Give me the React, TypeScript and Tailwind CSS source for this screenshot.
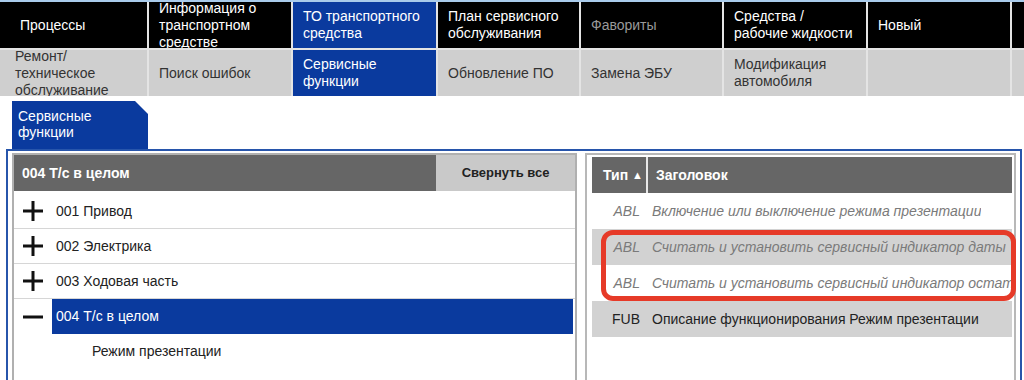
import React from "react";

const topRow = [
  { label: "Процессы", cls: "bg-black text-white pl-[20px]" },
  { label: "Информация о транспортном средстве", cls: "bg-black text-white" },
  { label: "ТО транспортного средства", cls: "bg-[#0a3a9e] text-white" },
  { label: "План сервисного обслуживания", cls: "bg-black text-white" },
  { label: "Фавориты", cls: "bg-black text-[#9a9a9a]" },
  { label: "Средства / рабочие жидкости", cls: "bg-black text-white" },
  { label: "Новый", cls: "bg-black text-white" },
  { label: "", cls: "bg-black" },
];

const subRow = [
  { label: "Ремонт/ техническое обслуживание", cls: "bg-[#cfcfcf] text-[#333] pl-[15px]" },
  { label: "Поиск ошибок", cls: "bg-[#cfcfcf] text-[#333]" },
  { label: "Сервисные функции", cls: "bg-[#0a3a9e] text-white" },
  { label: "Обновление ПО", cls: "bg-[#cfcfcf] text-[#333]" },
  { label: "Замена ЭБУ", cls: "bg-[#cfcfcf] text-[#333]" },
  { label: "Модификация автомобиля", cls: "bg-[#cfcfcf] text-[#333]" },
  { label: "", cls: "bg-[#cfcfcf]" },
  { label: "", cls: "bg-[#cfcfcf]" },
];

const groups = [
  { label: "001 Привод", open: false },
  { label: "002 Электрика", open: false },
  { label: "003 Ходовая часть", open: false },
  { label: "004 Т/с в целом", open: true },
];

const docs = [
  { type: "ABL", title: "Включение или выключение режима презентации", italic: true, shade: false },
  { type: "ABL", title: "Считать и установить сервисный индикатор даты", italic: true, shade: true },
  { type: "ABL", title: "Считать и установить сервисный индикатор остатка пробега", italic: true, shade: false },
  { type: "FUB", title: "Описание функционирования Режим презентации", italic: false, shade: true },
];

// plus / minus glyph for tree rows
const Toggle = ({ open }: { open: boolean }) => (
  <svg width="20" height="20" viewBox="0 0 20 20" className="shrink-0">
    <rect x="0" y="8.5" width="20" height="3" fill="#111" />
    {!open && <rect x="8.5" y="0" width="3" height="20" fill="#111" />}
  </svg>
);

export default function App() {
  return (
    <div className="w-[1024px] h-[380px] overflow-hidden bg-white font-['Liberation_Sans',Arial,sans-serif]">
      <div className="h-[2px] bg-[#a9cbeb]" />

      {/* main navigation */}
      <div className="grid grid-cols-[147px_142px_143px_141px_141px_142px_142px_1fr] grid-rows-[46px_46px] gap-[2px] bg-[#e4e4e4]">
        {topRow.map((c, i) => (
          <div key={"t" + i} className={`flex items-center overflow-hidden px-[10px] text-[14px] leading-[17px] ${c.cls}`}>
            {c.label}
          </div>
        ))}
        {subRow.map((c, i) => (
          <div key={"s" + i} className={`flex items-center overflow-hidden px-[10px] text-[14px] leading-[17px] ${c.cls}`}>
            {c.label}
          </div>
        ))}
      </div>

      {/* tab */}
      <div className="pt-[5px] pl-[12px]">
        <div className="w-[136px] h-[48px] bg-[#0a3a9e] text-white text-[14px] leading-[16px] pl-[6px] pt-[7px] [clip-path:polygon(0_0,calc(100%-13px)_0,100%_13px,100%_100%,0_100%)]">
          Сервисные
          <br />
          функции
        </div>
      </div>

      {/* content frame */}
      <div className="ml-[6px] w-[1016px] h-[240px] border-2 border-[#2755ab] px-[4px] pt-[2px] flex gap-[8px] items-start">
        {/* tree panel */}
        <div className="w-[565px] h-[240px] border-2 border-[#b0b0b0] flex flex-col">
          <div className="h-[36px] shrink-0 flex bg-[#666666]">
            <div className="flex-1 flex items-center pl-[8px] text-white font-bold text-[14px]">004 Т/с в целом</div>
            <div className="w-[139px] flex items-center justify-center bg-[#c9c9c9] text-[#222] font-bold text-[13px]">
              Свернуть все
            </div>
          </div>
          <div className="pt-[3px] flex flex-col">
            {groups.map((g, i) => (
              <div
                key={g.label}
                className={`h-[35px] flex items-center pl-[9px] pr-[2px] ${i < 3 ? "border-b border-[#d6d6d6]" : ""}`}
              >
                <Toggle open={g.open} />
                <div
                  className={`ml-[9px] flex-1 h-full flex items-center pl-[4px] text-[14px] ${
                    g.open ? "bg-[#0a3a9e] text-white" : "text-[#222]"
                  }`}
                >
                  {g.label}
                </div>
              </div>
            ))}
            <div className="h-[35px] flex items-center pl-[78px] text-[14px] text-[#222]">Режим презентации</div>
          </div>
        </div>

        {/* document list */}
        <div className="relative w-[431px] h-[240px] border-2 border-[#b8b8b8] pt-[2px] pl-[5px] pr-[2px]">
          <div className="h-[36px] flex bg-[#666666] text-white font-bold text-[14px]">
            <div className="w-[54px] shrink-0 flex items-center pl-[11px] gap-[4px]">
              Тип <span className="text-[11px]">▲</span>
            </div>
            <div className="w-[2px] shrink-0 bg-[#e8e8e8]" />
            <div className="flex-1 flex items-center pl-[8px]">Заголовок</div>
          </div>
          {docs.map((d, i) => (
            <div
              key={i}
              className={`h-[36px] flex items-center text-[14px] whitespace-nowrap overflow-hidden ${
                d.shade ? "bg-[#d2d2d2]" : "bg-white"
              } ${d.italic ? "italic text-[#7a7a7a]" : "text-[#222]"}`}
            >
              <div className="w-[48px] shrink-0 text-right">{d.type}</div>
              <div className="ml-[12px] min-w-0 overflow-hidden">{d.title}</div>
            </div>
          ))}
          {/* highlight annotation */}
          <div className="absolute left-[14px] right-[-2px] top-[75px] h-[71px] border-[5px] border-[#e63a28] rounded-[12px]" />
        </div>
      </div>
    </div>
  );
}
